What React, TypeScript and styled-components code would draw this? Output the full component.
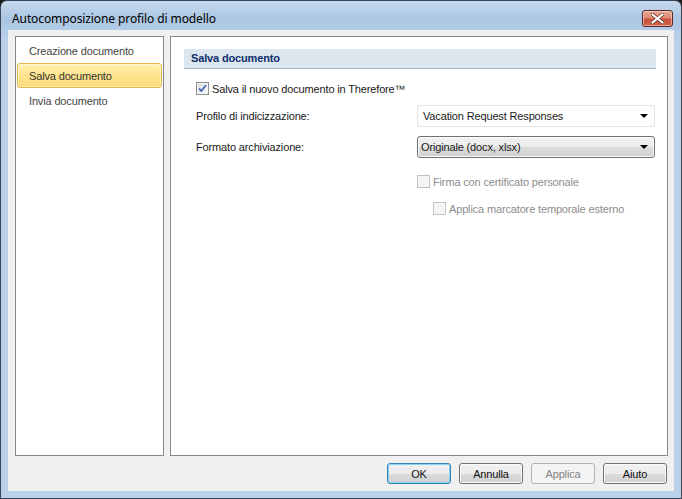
import React from 'react';
import styled, { createGlobalStyle, css } from 'styled-components';

const GlobalStyle = createGlobalStyle`
  html, body {
    margin: 0;
    padding: 0;
    background: #1c1c1c;
  }
  * {
    box-sizing: border-box;
  }
`;

const Window = styled.div`
  width: 682px;
  height: 499px;
  border: 1px solid #3a4656;
  border-radius: 7px 7px 0 0;
  background: linear-gradient(180deg, #c6daee 0px, #aac5e2 18px, #b3cce7 29px, #b9d1ea 40px);
  display: flex;
  flex-direction: column;
  overflow: hidden;
  font-family: 'Liberation Sans', Arial, sans-serif;
  font-size: 11px;
  letter-spacing: -0.15px;
  color: #1a1a1a;
`;

const TitleBar = styled.div`
  height: 29px;
  display: flex;
  justify-content: space-between;
  align-items: flex-start;
  padding: 0 8px 0 11px;
`;

const Title = styled.div`
  font-family: 'Noto Sans', 'Open Sans', sans-serif;
  font-size: 12px;
  line-height: 16px;
  padding-top: 10px;
  color: #000;
  letter-spacing: -0.1px;
`;

const CloseButton = styled.div`
  width: 31px;
  height: 17px;
  margin-top: 9px;
  border: 1px solid #5a2a26;
  border-radius: 3px;
  background: linear-gradient(180deg, #eaa898 0%, #dd8a76 45%, #c8503a 55%, #d0664a 100%);
  box-shadow: inset 0 0 0 1px rgba(255, 220, 210, 0.55);
  display: flex;
  align-items: center;
  justify-content: center;
`;

const Client = styled.div`
  flex: 1;
  margin: 0 7px 7px 7px;
  background: #f0f0f0;
  padding: 6px 6px 0 7px;
  display: flex;
  flex-direction: column;
`;

const Main = styled.div`
  height: 420px;
  display: flex;
  gap: 6px;
`;

const NavList = styled.div`
  width: 149px;
  border: 1px solid #828790;
  background: #fff;
  padding: 1px 1px 0 1px;
  display: flex;
  flex-direction: column;
`;

const NavItem = styled.div<{ $selected?: boolean }>`
  height: 25px;
  line-height: 24px;
  padding-left: 11px;
  border: 1px solid transparent;
  border-radius: 3px;
  color: #444;
  ${(p) =>
    p.$selected &&
    css`
      border-color: #e5b548;
      background: linear-gradient(180deg, #fff0b4 0%, #fde48c 50%, #fbdb7a 100%);
      box-shadow: inset 0 0 0 1px rgba(255, 250, 225, 0.6);
      color: #333;
    `}
`;

const Panel = styled.div`
  flex: 1;
  border: 1px solid #828790;
  background: #fff;
  padding: 12px 11px 0 13px;
  display: flex;
  flex-direction: column;
`;

const SectionHeader = styled.div`
  height: 20px;
  background: #dce6ee;
  border-bottom: 1px solid #a7b2bc;
  padding-left: 7px;
  line-height: 19px;
  font-weight: bold;
  color: #0e2d6b;
`;

const Form = styled.div`
  padding-left: 12px;
  display: flex;
  flex-direction: column;
`;

const CheckRow = styled.label<{ $top: number; $indent?: number; $disabled?: boolean }>`
  display: flex;
  align-items: center;
  gap: 3px;
  height: 13px;
  margin-top: ${(p) => p.$top}px;
  margin-left: ${(p) => p.$indent ?? 0}px;
  color: ${(p) => (p.$disabled ? '#8d8d8d' : '#1a1a1a')};
  white-space: nowrap;
`;

const Box = styled.span<{ $disabled?: boolean }>`
  width: 13px;
  height: 13px;
  flex: none;
  border: 1px solid ${(p) => (p.$disabled ? '#c2c2c2' : '#8e8f8f')};
  background: ${(p) =>
    p.$disabled ? '#f4f4f4' : 'linear-gradient(135deg, #d8d8d8 0%, #eeeeee 60%, #ffffff 100%)'};
  box-shadow: inset 0 0 0 1px ${(p) => (p.$disabled ? '#f8f8f8' : '#f4f4f4')};
  display: flex;
  align-items: center;
  justify-content: center;
`;

const FieldRow = styled.div<{ $top: number }>`
  display: grid;
  grid-template-columns: 221px 238px;
  align-items: center;
  margin-top: ${(p) => p.$top}px;
`;

const Combo = styled.div<{ $flat?: boolean }>`
  height: 22px;
  display: flex;
  align-items: center;
  justify-content: space-between;
  padding: 0 5px 0 5px;
  ${(p) =>
    p.$flat
      ? css`
          border: 1px solid #e2e3ea;
          background: #fff;
          border-radius: 1px;
        `
      : css`
          border: 1px solid #707070;
          border-radius: 3px;
          background: linear-gradient(180deg, #f2f2f2 0%, #ebebeb 50%, #dddddd 51%, #cfcfcf 100%);
          box-shadow: inset 0 0 0 1px #fcfcfc;
          padding-left: 3px;
        `}
`;

const Arrow = styled.span`
  width: 0;
  height: 0;
  border-left: 4px solid transparent;
  border-right: 4px solid transparent;
  border-top: 4px solid #000;
  margin-right: 1px;
`;

const Footer = styled.div`
  display: flex;
  justify-content: flex-end;
  gap: 8px;
  padding-top: 7px;
  padding-right: 1px;
`;

const Button = styled.div<{ $primary?: boolean; $disabled?: boolean }>`
  width: 64px;
  height: 21px;
  border-radius: 3px;
  display: flex;
  align-items: center;
  justify-content: center;
  border: 1px solid #707070;
  background: linear-gradient(180deg, #f2f2f2 0%, #ebebeb 50%, #dddddd 51%, #cfcfcf 100%);
  box-shadow: inset 0 0 0 1px #fcfcfc;
  color: #111;
  ${(p) =>
    p.$primary &&
    css`
      border-color: #3c7fb1;
      box-shadow: inset 0 0 0 1px #7fd6f7;
    `}
  ${(p) =>
    p.$disabled &&
    css`
      border-color: #adb2b5;
      background: #f4f4f4;
      box-shadow: none;
      color: #838383;
    `}
`;

const Check = () => (
  <svg width="9" height="9" viewBox="0 0 9 9">
    <path d="M1 4.5 L3.3 7 L8 1.2" fill="none" stroke="#3a5fc0" strokeWidth="1.7" />
  </svg>
);

const CloseGlyph = () => (
  <svg width="13" height="11" viewBox="0 0 13 11">
    <path
      d="M1.5 1.5 L11.5 9.5 M11.5 1.5 L1.5 9.5"
      stroke="#6e3a33"
      strokeWidth="3.6"
      strokeLinecap="square"
    />
    <path
      d="M1.5 1.5 L11.5 9.5 M11.5 1.5 L1.5 9.5"
      stroke="#ffffff"
      strokeWidth="2"
      strokeLinecap="square"
    />
  </svg>
);

const navItems = ['Creazione documento', 'Salva documento', 'Invia documento'];

export default function App() {
  return (
    <>
      <GlobalStyle />
      <Window>
        <TitleBar>
          <Title>Autocomposizione profilo di modello</Title>
          <CloseButton>
            <CloseGlyph />
          </CloseButton>
        </TitleBar>
        <Client>
          <Main>
            <NavList>
              {navItems.map((item) => (
                <NavItem key={item} $selected={item === 'Salva documento'}>
                  {item}
                </NavItem>
              ))}
            </NavList>
            <Panel>
              <SectionHeader>Salva documento</SectionHeader>
              <Form>
                <CheckRow $top={13}>
                  <Box>
                    <Check />
                  </Box>
                  Salva il nuovo documento in Therefore™
                </CheckRow>
                <FieldRow $top={10}>
                  <span>Profilo di indicizzazione:</span>
                  <Combo $flat>
                    <span>Vacation Request Responses</span>
                    <Arrow />
                  </Combo>
                </FieldRow>
                <FieldRow $top={9}>
                  <span>Formato archiviazione:</span>
                  <Combo>
                    <span>Originale (docx, xlsx)</span>
                    <Arrow />
                  </Combo>
                </FieldRow>
                <CheckRow $top={17} $indent={221} $disabled>
                  <Box $disabled />
                  Firma con certificato personale
                </CheckRow>
                <CheckRow $top={14} $indent={237} $disabled>
                  <Box $disabled />
                  Applica marcatore temporale esterno
                </CheckRow>
              </Form>
            </Panel>
          </Main>
          <Footer>
            <Button $primary>OK</Button>
            <Button>Annulla</Button>
            <Button $disabled>Applica</Button>
            <Button>Aiuto</Button>
          </Footer>
        </Client>
      </Window>
    </>
  );
}
